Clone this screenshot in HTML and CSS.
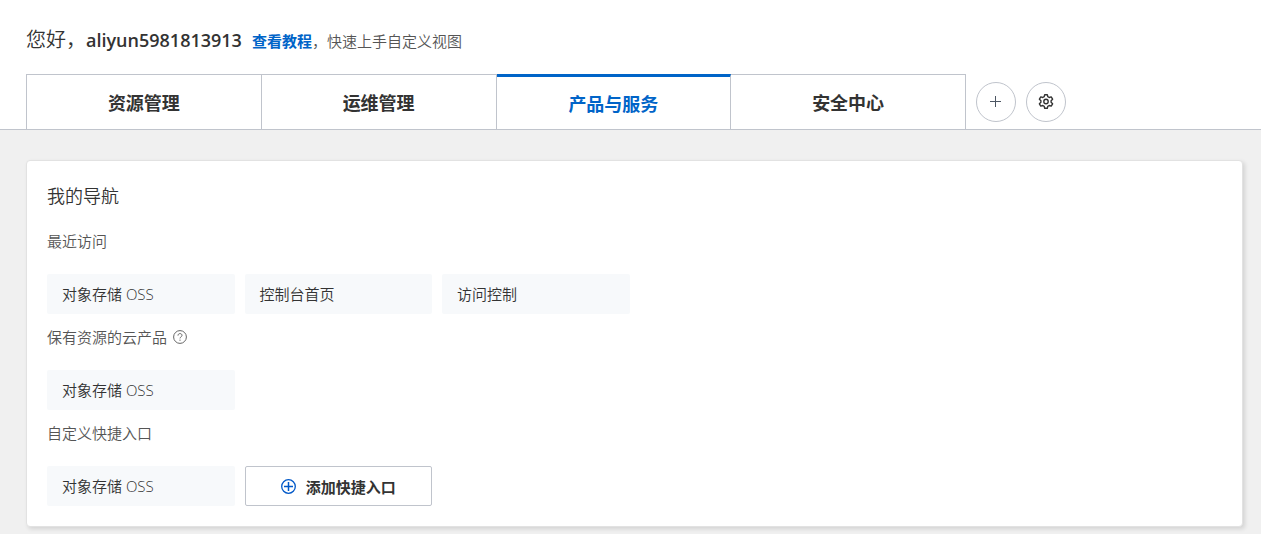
FILE: index.html
```html
<!DOCTYPE html>
<html lang="zh-CN">
<head>
    <meta charset="UTF-8">
    <meta name="viewport" content="width=device-width, initial-scale=1.0">
    <title>控制台首页</title>
    <link rel="stylesheet" href="styles.css">
</head>
<body>
    <header class="header">
        <div class="greeting">
            <h1 class="greeting-name">您好，<strong>aliyun5981813913</strong></h1>
            <p class="greeting-tip"><a href="#">查看教程</a>，快速上手自定义视图</p>
        </div>

        <nav class="tab-bar">
            <div class="tabs" role="tablist">
                <button class="tab" type="button" role="tab">资源管理</button>
                <button class="tab" type="button" role="tab">运维管理</button>
                <button class="tab active" type="button" role="tab" aria-selected="true">产品与服务</button>
                <button class="tab" type="button" role="tab">安全中心</button>
            </div>
            <div class="tab-actions">
                <button class="round-button" type="button" aria-label="添加视图">
                    <svg width="14" height="14" viewBox="0 0 14 14" fill="none" stroke="#4d5663">
                        <path d="M6.5 1v11M1 6.5h11"/>
                    </svg>
                </button>
                <button class="round-button" type="button" aria-label="设置">
                    <svg width="16" height="16" viewBox="0 0 16 16" fill="none" stroke="#333" stroke-width="1.4" stroke-linejoin="round">
                        <path d="M6.7 .7h2.6l.5 2 1.4.8 2-.6 1.4 2.3-1.5 1.5v1.6l1.5 1.5-1.4 2.3-2-.6-1.4.8-.5 2H6.7l-.5-2-1.4-.8-2 .6-1.4-2.3 1.5-1.5V6.7L1.4 5.2l1.4-2.3 2 .6 1.4-.8z"/>
                        <circle cx="8" cy="7.5" r="2.2"/>
                    </svg>
                </button>
            </div>
        </nav>
    </header>

    <main class="content">
        <section class="card">
            <h2 class="card-title">我的导航</h2>

            <h3 class="group-title">最近访问</h3>
            <div class="link-grid">
                <a class="link-item" href="#">对象存储 OSS</a>
                <a class="link-item" href="#">控制台首页</a>
                <a class="link-item" href="#">访问控制</a>
            </div>

            <h3 class="group-title">
                保有资源的云产品
                <svg width="14" height="14" viewBox="0 0 14 14" fill="none" stroke="#666">
                    <circle cx="7" cy="7" r="6.4"/>
                    <path d="M5 5.6C5 4.3 5.8 3.6 7 3.6s2 .7 2 1.8c0 1.4-2 1.5-2 3M7 9.6v1.2"/>
                </svg>
            </h3>
            <div class="link-grid">
                <a class="link-item" href="#">对象存储 OSS</a>
            </div>

            <h3 class="group-title">自定义快捷入口</h3>
            <div class="link-grid">
                <a class="link-item" href="#">对象存储 OSS</a>
                <button class="add-button" type="button">
                    <svg width="15" height="15" viewBox="0 0 15 15" fill="none" stroke="#0058c8" stroke-width="1.3">
                        <circle cx="7.5" cy="7.5" r="6.8"/>
                        <path d="M7.5 3v9M3 7.5h9" stroke-width="1.5"/>
                    </svg>
                    添加快捷入口
                </button>
            </div>
        </section>
    </main>
</body>
</html>
```
FILE: styles.css
```css
* {
    box-sizing: border-box;
}
body {
    margin: 0;
    font-family: "Open Sans", "Noto Sans CJK SC", sans-serif;
    font-size: 15px;
    font-weight: 350;
    color: #333;
    background-color: #f0f0f0;
}
h1, h2, h3, p {
    margin: 0;
    font-weight: 350;
}
button {
    padding: 0;
    font-family: inherit;
    color: inherit;
    background-color: #fff;
    cursor: pointer;
}
.header {
    padding: 26px 18px 0 26px;
    background-color: #fff;
    border-bottom: 1px solid #c0c4cc;
}
.greeting {
    display: flex;
    align-items: baseline;
    gap: 10px;
    height: 28px;
    margin-bottom: 20px;
    line-height: 28px;
}
.greeting-name {
    font-size: 20px;
}
.greeting-name strong {
    font-size: 18px;
    font-weight: 600;
}
.greeting-tip {
    color: #555;
}
.greeting-tip a {
    font-weight: bold;
    color: #0064c8;
    text-decoration: none;
}
.tab-bar {
    display: flex;
    align-items: center;
    gap: 10px;
}
.tabs {
    display: flex;
    flex: 0 1 940px;
    border-left: 1px solid #c0c4cc;
}
.tab {
    flex: 1;
    height: 55px;
    border: solid #c0c4cc;
    border-width: 1px 1px 0 0;
    font-size: 18px;
    font-weight: bold;
}
.tab.active {
    border-top: 3px solid #0064c8;
    color: #0064c8;
}
.tab-actions {
    display: flex;
    gap: 10px;
}
.round-button {
    display: flex;
    align-items: center;
    justify-content: center;
    width: 40px;
    height: 40px;
    border: 1px solid #c0c4cc;
    border-radius: 50%;
}
.content {
    padding: 30px 18px 8px 26px;
}
.card {
    padding: 22px 20px 20px;
    background-color: #fff;
    border: 1px solid #e2e2e2;
    border-radius: 4px;
    box-shadow: 2px 2px 4px rgba(0, 0, 0, 0.12);
}
.card-title {
    margin-bottom: 21px;
    font-size: 18px;
    line-height: 26px;
}
.group-title {
    display: flex;
    align-items: center;
    gap: 6px;
    margin-bottom: 22px;
    font-size: 15px;
    line-height: 22px;
    color: #555;
}
.link-grid {
    display: grid;
    grid-template-columns: repeat(6, 1fr);
    gap: 10px;
}
.link-grid + .group-title {
    margin-top: 12px;
}
.link-item {
    padding: 0 15px;
    line-height: 40px;
    color: #333;
    text-decoration: none;
    background-color: #f7f9fb;
    border-radius: 2px;
}
.add-button {
    display: flex;
    align-items: center;
    justify-content: center;
    gap: 10px;
    height: 40px;
    border: 1px solid #c0c4cc;
    border-radius: 2px;
    font-size: 15px;
    font-weight: bold;
}
```
